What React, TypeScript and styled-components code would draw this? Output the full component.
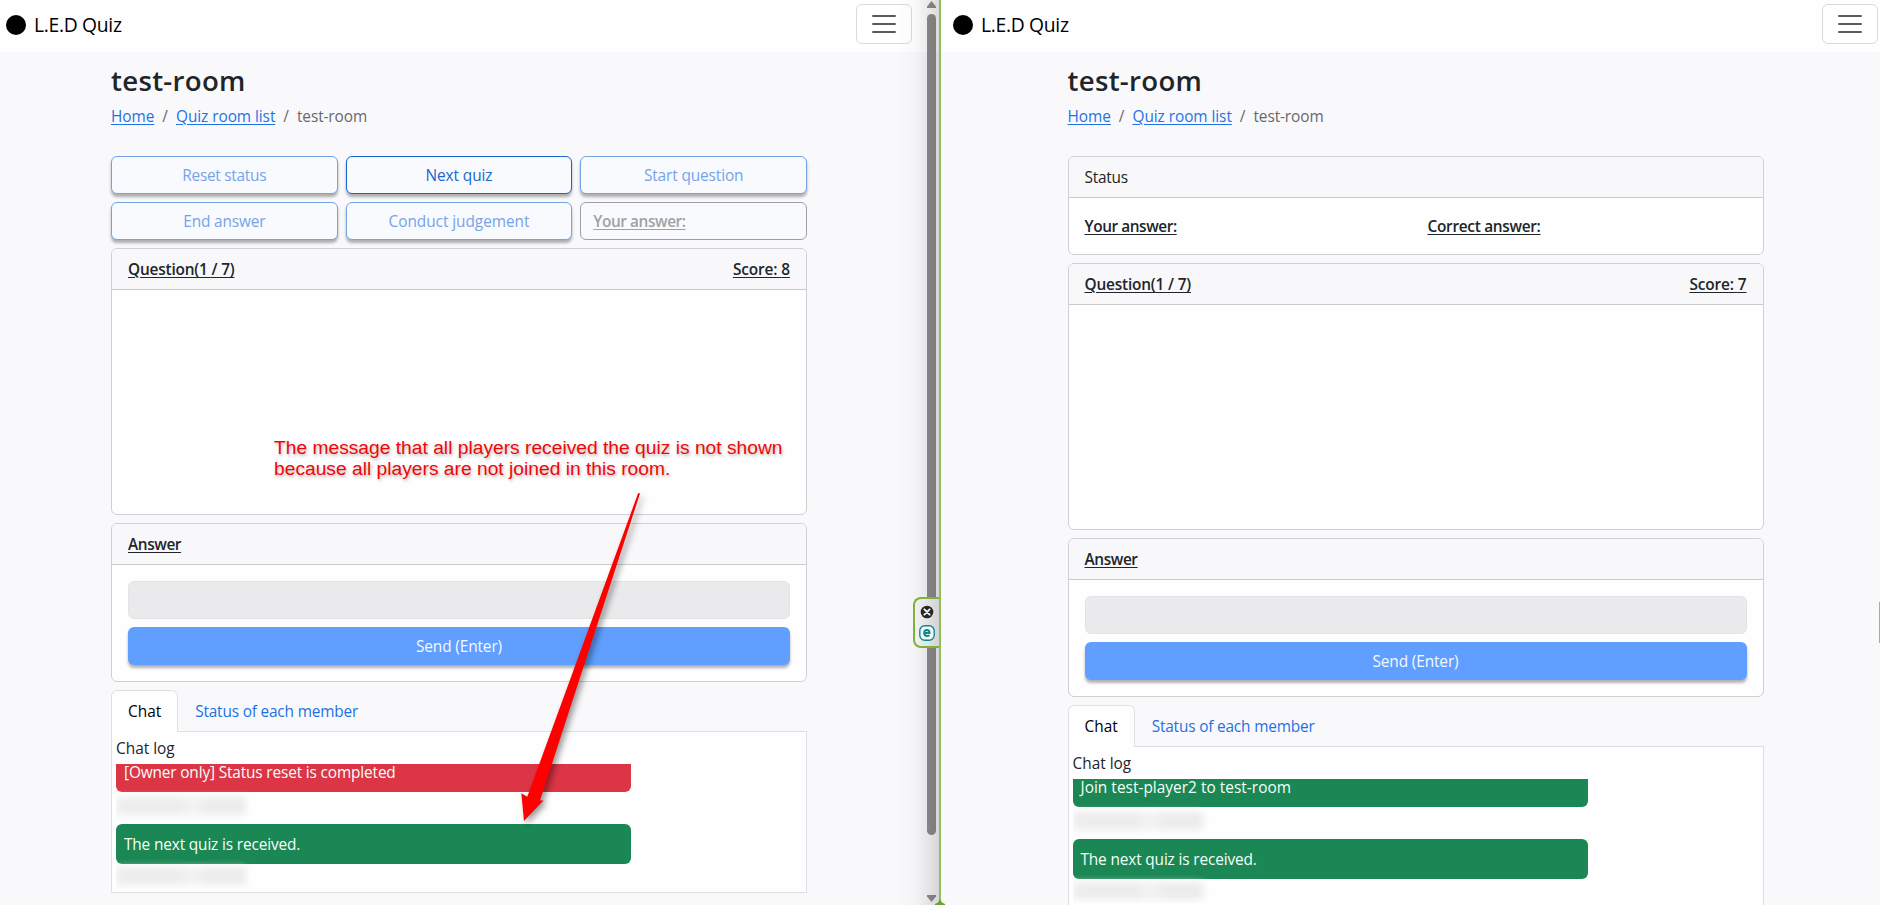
import React from 'react';
import styled, { createGlobalStyle, css } from 'styled-components';

const GlobalStyle = createGlobalStyle`
  * { box-sizing: border-box; }
  body {
    margin: 0;
    overflow: hidden;
    background: #f9f9fc;
    color: #212529;
    font: 400 15.4px/24px "Open Sans", "Noto Sans", sans-serif;
  }
`;

const Screen = styled.div`
  position: relative;
  display: flex;
  width: 1880px;
  height: 905px;
  overflow: hidden;
`;

const Window = styled.section<{ $width: number }>`
  flex: none;
  width: ${(p) => p.$width}px;
  height: 905px;
  overflow: hidden;
`;

const Divider = styled.div`
  flex: none;
  display: flex;
  width: 29px;
  height: 905px;
`;

const ScrollTrack = styled.div`
  display: flex;
  flex-direction: column;
  align-items: center;
  width: 21px;
  padding: 1px 0 3px 6px;
  background: linear-gradient(#fefefe 52px, #f9f9fc 52px);
  svg { flex: none; display: block; }
`;

const ScrollThumb = styled.div`
  width: 9px;
  height: 821px;
  margin: 6px 0 auto;
  border-radius: 5px;
  background: #8e8e8e;
`;

const WindowEdge = styled.div`
  width: 2px;
  background: #8fc05c;
`;

const WindowGap = styled.div`
  flex: 1;
  background: linear-gradient(#fefefe 52px, #f9f9fc 52px);
`;

const Navbar = styled.header`
  display: flex;
  align-items: center;
  justify-content: space-between;
  height: 52px;
  padding: 0 6px 4px;
  background: #fefefe;
`;

const Brand = styled.div`
  display: flex;
  align-items: center;
  gap: 8px;
  padding-top: 1px;
  color: #000;
  font-size: 19.3px;
  line-height: 30px;
`;

const Dot = styled.span`
  width: 20px;
  height: 20px;
  border-radius: 50%;
  background: #000;
`;

const Toggler = styled.button`
  display: flex;
  align-items: center;
  justify-content: center;
  width: 56px;
  height: 40px;
  padding: 0;
  border: 1px solid #d9dadc;
  border-radius: 6px;
  background: #fff;
`;

const Container = styled.main`
  display: flex;
  flex-direction: column;
  gap: 8px;
  width: 696px;
  margin: 0 auto;
`;

const PageHead = styled.div`
  height: 96px;
  padding-top: 11px;
`;

const Title = styled.h1`
  margin: 0 0 8px;
  font-size: 27.6px;
  font-weight: 600;
  line-height: 34px;
  letter-spacing: 0.3px;
`;

const Breadcrumb = styled.nav`
  display: flex;
  gap: 8px;
  color: #65696e;
`;

const Text = styled.span<{ $track?: number }>`
  letter-spacing: ${(p) => p.$track ?? 0}px;
  white-space: nowrap;
`;

const Link = styled(Text)`
  color: #1f73e4;
  text-decoration: underline;
  text-underline-offset: 2px;
  text-decoration-thickness: 1px;
`;

const Label = styled(Text)`
  font-weight: 600;
  text-decoration: underline;
  text-underline-offset: 2px;
  text-decoration-thickness: 1px;
`;

const Controls = styled.div`
  display: grid;
  grid-template-columns: repeat(3, 1fr);
  gap: 8px;
`;

const raised = css`
  box-shadow: 0 3px 3px rgba(0, 0, 0, 0.3);
`;

const OutlineButton = styled.button<{ $active?: boolean }>`
  height: 38px;
  padding: 2px 12px 0;
  border: 1px solid ${(p) => (p.$active ? '#1666d0' : '#75a4e6')};
  border-radius: 6px;
  background: #f8fafe;
  color: ${(p) => (p.$active ? '#1a67cf' : '#76a3e8')};
  font: inherit;
  ${raised}
`;

const AnswerBox = styled.div`
  display: flex;
  align-items: center;
  height: 38px;
  padding: 2px 12px 0;
  border: 1px solid #9da1a6;
  border-radius: 6px;
  background: #f8fafd;
  color: #9fa2a5;
`;

const Card = styled.section`
  overflow: hidden;
  border: 1px solid #cfd0d3;
  border-radius: 6px;
  background: #fefefe;
`;

const CardHeader = styled.div`
  display: flex;
  justify-content: space-between;
  padding: 9px 16px 7px;
  border-bottom: 1px solid #c9cacc;
  background: #f8f8fa;
`;

const CardBody = styled.div<{ $height?: number }>`
  display: flex;
  flex-direction: column;
  gap: 8px;
  height: ${(p) => (p.$height ? p.$height + 'px' : 'auto')};
  padding: 16px;
`;

const Columns = styled.div`
  display: grid;
  grid-template-columns: 343px 1fr;
  height: 24px;
  padding-top: 1px;
`;

const DisabledInput = styled.div`
  height: 38px;
  border: 1px solid #e2e3e5;
  border-radius: 6px;
  background: #eaeaec;
`;

const SendButton = styled.button`
  height: 38px;
  padding-top: 2px;
  border: 0;
  border-radius: 6px;
  background: #609fff;
  color: #f4f9ff;
  font: inherit;
  ${raised}
`;

const TabBar = styled.div`
  display: flex;
  height: 41px;
`;

const Tab = styled.div<{ $active?: boolean }>`
  height: 42px;
  padding: 9px 16px 0;
  border: 1px solid transparent;
  border-bottom: 0;
  color: #1f70e6;
  ${(p) =>
    p.$active &&
    css`
      z-index: 1;
      border-color: #dee0e4;
      border-radius: 6px 6px 0 0;
      background: #fefefe;
      color: #000;
    `}
`;

const ChatPanel = styled.div`
  padding: 5px 4px 4px;
  border: 1px solid #dee0e4;
  background: #fefefe;
`;

const ChatLog = styled.div`
  display: flex;
  flex-direction: column;
  justify-content: flex-end;
  height: 124px;
  margin-top: 3px;
  overflow: hidden;
`;

const Message = styled.div<{ $tone: 'success' | 'danger' }>`
  flex: none;
  width: 515px;
  height: 40px;
  padding: 9px 8px 7px;
  border-radius: 6px;
  background: ${(p) => (p.$tone === 'danger' ? '#dc3546' : '#1a8754')};
  color: #f6fffa;
`;

const Timestamp = styled.div<{ $last?: boolean }>`
  flex: none;
  display: flex;
  align-items: center;
  height: ${(p) => (p.$last ? 24 : 32)}px;
  padding-bottom: ${(p) => (p.$last ? 0 : 5)}px;
`;

const Redaction = styled.span`
  width: 130px;
  height: 18px;
  border-radius: 3px;
  background: linear-gradient(90deg, #ededee 0 50%, #f3f3f4 58%, #ececed 72%);
  filter: blur(3.5px);
`;

const Annotation = styled.div`
  position: absolute;
  left: 274px;
  top: 437px;
  color: #ee0808;
  font: 19.23px/21.4px "Liberation Sans", Arial, sans-serif;
  white-space: pre;
  text-shadow: 1px 2px 3px rgba(90, 40, 40, 0.35);
`;

const ArrowLayer = styled.svg`
  position: absolute;
  left: 500px;
  top: 480px;
  filter: drop-shadow(3px 3px 3px rgba(0, 0, 0, 0.4));
`;

const SideFade = styled.div`
  position: absolute;
  left: 895px;
  top: 0;
  width: 44px;
  height: 905px;
  background: linear-gradient(90deg, rgba(0, 0, 0, 0), rgba(0, 0, 0, 0.02) 45%, rgba(0, 0, 0, 0.08) 75%, rgba(0, 0, 0, 0.14));
`;

const DockTab = styled.div`
  position: absolute;
  left: 913px;
  top: 597px;
  display: flex;
  flex-direction: column;
  align-items: center;
  gap: 6px;
  width: 26px;
  height: 51px;
  padding: 6px 0 0;
  border: 2px solid #7fb238;
  border-right: 0;
  border-radius: 8px 0 0 8px;
  background: linear-gradient(90deg, #f2f2f4, #d4d4d7);
  svg { display: block; }
`;

const DockEdge = styled.div`
  position: absolute;
  left: 1879px;
  top: 602px;
  width: 1px;
  height: 41px;
  background: #9cc24e;
`;

const DockFoot = styled.svg`
  position: absolute;
  left: 935px;
  top: 899px;
`;

function Header() {
  return (
    <Navbar>
      <Brand>
        <Dot />
        <Text $track={-0.3}>L.E.D Quiz</Text>
      </Brand>
      <Toggler>
        <svg width="24" height="20" viewBox="0 0 24 20" stroke="#5b5b5b" strokeWidth="2" strokeLinecap="round">
          <path d="M1 2h22M1 10h22M1 18h22" />
        </svg>
      </Toggler>
    </Navbar>
  );
}

function Heading() {
  return (
    <PageHead>
      <Title>test-room</Title>
      <Breadcrumb>
        <Link $track={-0.04}>Home</Link>
        <span>/</span>
        <Link $track={-0.06}>Quiz room list</Link>
        <span>/</span>
        <Text $track={-0.1}>test-room</Text>
      </Breadcrumb>
    </PageHead>
  );
}

function QuestionCard({ score }: { score: number }) {
  return (
    <Card>
      <CardHeader>
        <Label $track={-0.18}>Question(1 / 7)</Label>
        <Label $track={-0.12}>Score: {score}</Label>
      </CardHeader>
      <CardBody $height={224} />
    </Card>
  );
}

function AnswerCard() {
  return (
    <Card>
      <CardHeader>
        <Label $track={-0.4}>Answer</Label>
      </CardHeader>
      <CardBody>
        <DisabledInput />
        <SendButton>
          <Text $track={-0.12}>Send (Enter)</Text>
        </SendButton>
      </CardBody>
    </Card>
  );
}

function Chat({ first, tone, track }: { first: string; tone: 'success' | 'danger'; track: number }) {
  return (
    <div>
      <TabBar>
        <Tab $active>Chat</Tab>
        <Tab>
          <Text $track={-0.18}>Status of each member</Text>
        </Tab>
      </TabBar>
      <ChatPanel>
        <Text>Chat log</Text>
        <ChatLog>
          <Message $tone={tone}>
            <Text $track={track}>{first}</Text>
          </Message>
          <Timestamp>
            <Redaction />
          </Timestamp>
          <Message $tone="success">
            <Text $track={-0.15}>The next quiz is received.</Text>
          </Message>
          <Timestamp $last>
            <Redaction />
          </Timestamp>
        </ChatLog>
      </ChatPanel>
    </div>
  );
}

export default function App() {
  return (
    <Screen>
      <GlobalStyle />
      <Window $width={918}>
        <Header />
        <Container>
          <Heading />
          <Controls>
            <OutlineButton><Text $track={-0.27}>Reset status</Text></OutlineButton>
            <OutlineButton $active><Text $track={-0.1}>Next quiz</Text></OutlineButton>
            <OutlineButton><Text $track={-0.12}>Start question</Text></OutlineButton>
            <OutlineButton><Text $track={-0.15}>End answer</Text></OutlineButton>
            <OutlineButton><Text $track={-0.05}>Conduct judgement</Text></OutlineButton>
            <AnswerBox><Label $track={-0.43}>Your answer:</Label></AnswerBox>
          </Controls>
          <QuestionCard score={8} />
          <AnswerCard />
          <Chat first="[Owner only] Status reset is completed" tone="danger" track={-0.15} />
        </Container>
      </Window>
      <Divider>
        <ScrollTrack>
          <svg width="9" height="7" viewBox="0 0 9 7"><path d="M4.5 0L9 5.5V7H0V5.5z" fill="#8e8e8e" /></svg>
          <ScrollThumb />
          <svg width="9" height="7" viewBox="0 0 9 7"><path d="M0 0H9V1.5L4.5 7L0 1.5z" fill="#8e8e8e" /></svg>
        </ScrollTrack>
        <WindowEdge />
        <WindowGap />
      </Divider>
      <Window $width={937}>
        <Header />
        <Container>
          <Heading />
          <Card>
            <CardHeader><Text $track={-0.25}>Status</Text></CardHeader>
            <CardBody>
              <Columns>
                <Label $track={-0.43}>Your answer:</Label>
                <Label $track={-0.3}>Correct answer:</Label>
              </Columns>
            </CardBody>
          </Card>
          <QuestionCard score={7} />
          <AnswerCard />
          <Chat first="Join test-player2 to test-room" tone="success" track={0.03} />
        </Container>
      </Window>
      <SideFade />
      <Annotation>{'The message that all players received the quiz is not shown\nbecause all players are not joined in this room.'}</Annotation>
      <ArrowLayer width="160" height="360" viewBox="500 480 160 360">
        <path d="M638.2 493L640 493.5L540 800.5L543.5 800.5L524 821L521.3 793.3L527.3 796.8Z" fill="#fe0000" />
      </ArrowLayer>
      <DockTab>
        <svg width="14" height="14" viewBox="0 0 14 14">
          <circle cx="7" cy="7" r="6.3" fill="#25252c" />
          <path d="M4.4 4.4l5.2 5.2M9.6 4.4L4.4 9.6" stroke="#eee" strokeWidth="2" strokeLinecap="round" />
        </svg>
        <svg width="16" height="16" viewBox="0 0 16 16">
          <rect x="0.8" y="0.8" width="14.4" height="14.4" rx="5" fill="#eef8f8" stroke="#16868c" strokeWidth="1.4" />
          <path d="M5.2 8h5.3c0-1.8-1-3-2.6-3S5.2 6.2 5.2 8s1.2 3.1 2.9 3.1c1 0 1.7-.3 2.3-.8" fill="none" stroke="#16868c" strokeWidth="2" />
        </svg>
      </DockTab>
      <DockEdge />
      <DockFoot width="10" height="6" viewBox="0 0 10 6"><path d="M5 0L7 3.5L10 5V6H0V5L3 3.5z" fill="#6ea030" /></DockFoot>
    </Screen>
  );
}
